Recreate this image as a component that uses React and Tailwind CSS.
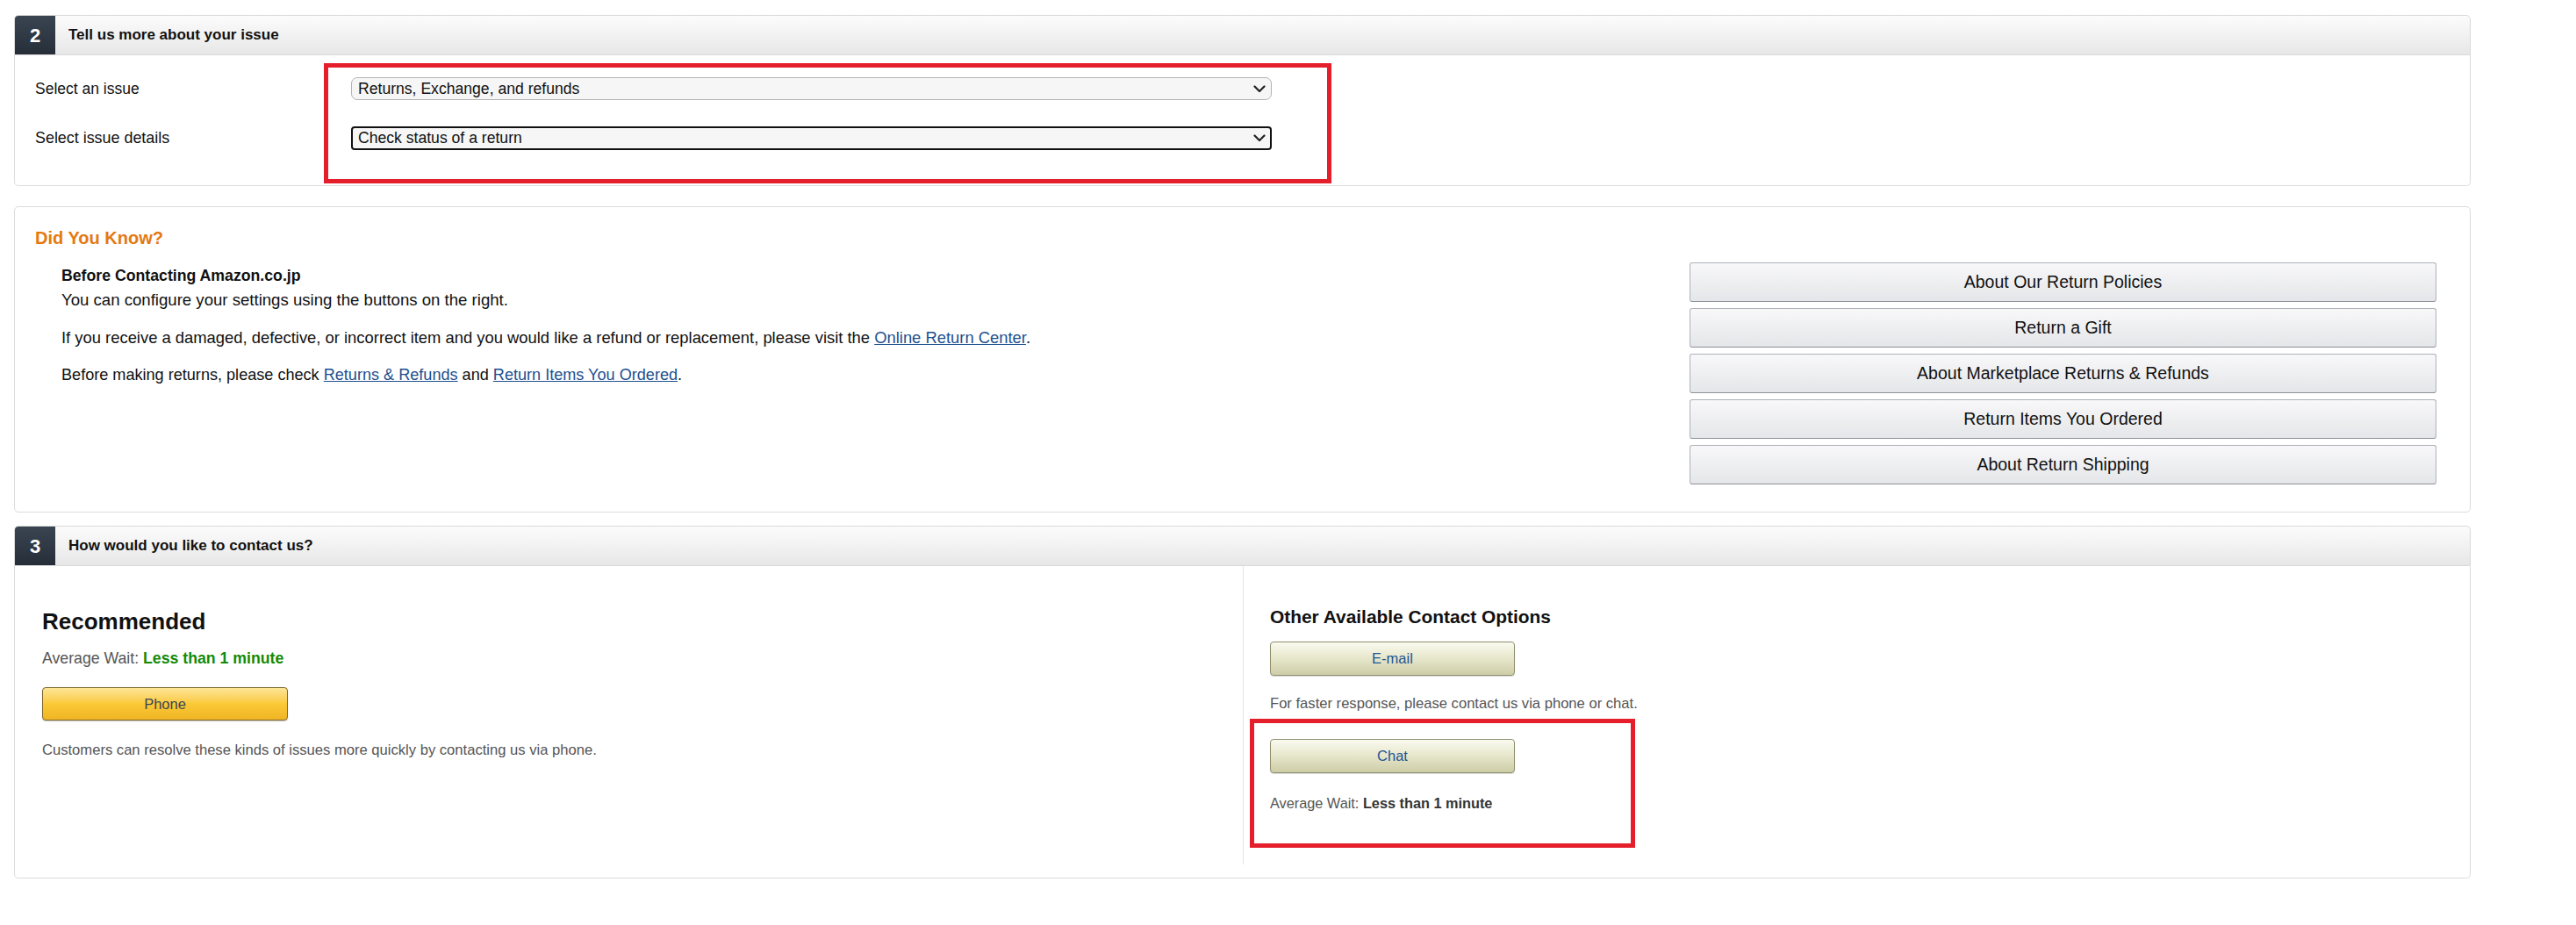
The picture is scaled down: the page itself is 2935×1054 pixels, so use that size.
import React from 'react';

const font = { fontFamily: '"Liberation Sans", Arial, sans-serif' };

const Chevron = () => (
  <svg width="14" height="9" viewBox="0 0 14 9" className="shrink-0">
    <path d="M1.5 1.5 L7 7 L12.5 1.5" fill="none" stroke="#222" strokeWidth="2.2" strokeLinecap="round" strokeLinejoin="round" />
  </svg>
);

const StepHeader = ({ num, title }) => (
  <div className="flex h-[46px] items-stretch rounded-t-[5px] border border-[#d9d9d9] bg-gradient-to-b from-[#fcfcfc] to-[#e7e7e7]">
    <div className="flex w-[46px] items-center justify-center rounded-tl-[4px] bg-gradient-to-b from-[#3b4552] to-[#252e38] text-[22px] font-bold text-white">
      {num}
    </div>
    <div className="ml-[15px] flex items-center text-[17px] font-bold text-[#111]">{title}</div>
  </div>
);

const SideButton = ({ children }) => (
  <div className="flex h-[45px] items-center justify-center rounded-[3px] border border-[#adb1b8] border-b-[#8d9096] bg-gradient-to-b from-[#f8f8f9] to-[#e5e6e9] text-[19.5px] text-[#111]">
    {children}
  </div>
);

const KhakiButton = ({ children }) => (
  <div className="flex h-[39px] w-[279px] items-center justify-center rounded-[4px] border border-[#8f8f6e] bg-gradient-to-b from-[#fafaf0] via-[#e6e6cb] to-[#cdcda7] text-[16.5px] text-[#1d5593] shadow-[0_1px_1px_rgba(0,0,0,0.15)]">
    {children}
  </div>
);

const Link = ({ children }) => <span className="text-[#1d4f8f] underline">{children}</span>;

export default function App() {
  return (
    <div className="min-h-[1054px] w-[2935px] bg-white pt-[17px] text-[#111]" style={font}>
      {/* Step 2 */}
      <div className="ml-[16px] w-[2799px]">
        <StepHeader num="2" title="Tell us more about your issue" />
        <div className="relative rounded-b-[5px] border-x border-b border-[#dcdcdc] pb-[41px] pt-[25px]">
          <div className="flex h-[26px] items-center">
            <div className="w-[383px] pl-[23px] text-[17.5px]">Select an issue</div>
            <div className="flex h-[26px] w-[1049px] items-center justify-between rounded-[7px] border border-[#b4b4b4] bg-[#f6f6f6] pl-[7px] pr-[6px] text-[17.6px]">
              <span>Returns, Exchange, and refunds</span>
              <Chevron />
            </div>
          </div>
          <div className="mt-[30px] flex h-[26px] items-center">
            <div className="w-[383px] pl-[23px] text-[17.9px]">Select issue details</div>
            <div className="flex h-[27px] w-[1049px] items-center justify-between rounded-[4px] border-2 border-[#111] bg-[#f6f6f6] pl-[6px] pr-[5px] text-[17.6px]">
              <span>Check status of a return</span>
              <Chevron />
            </div>
          </div>
          <div className="pointer-events-none absolute left-[352px] top-[9px] h-[137px] w-[1148px] border-[5px] border-[#e41f2b]" />
        </div>
      </div>

      {/* Did you know */}
      <div className="ml-[16px] mt-[23px] flex h-[349px] w-[2799px] rounded-[5px] border border-[#dcdcdc]">
        <div className="flex-1 pl-[23px] pt-[23px]">
          <div className="text-[20px] font-bold leading-[24px] text-[#e47911]">Did You Know?</div>
          <div className="mt-[17px] pl-[30px] text-[18.4px] leading-[28px]">
            <div className="text-[17.7px] font-bold">Before Contacting Amazon.co.jp</div>
            <div className="text-[18.6px]">You can configure your settings using the buttons on the right.</div>
            <div className="mt-[15px]">
              If you receive a damaged, defective, or incorrect item and you would like a refund or replacement, please visit the{' '}
              <Link>Online Return Center</Link>.
            </div>
            <div className="mt-[14px] text-[18.1px]">
              Before making returns, please check <Link>Returns &amp; Refunds</Link> and <Link>Return Items You Ordered</Link>.
            </div>
          </div>
        </div>
        <div className="mr-[38px] flex w-[851px] flex-col gap-[7px] pt-[63px]">
          <SideButton>About Our Return Policies</SideButton>
          <SideButton>Return a Gift</SideButton>
          <SideButton>About Marketplace Returns &amp; Refunds</SideButton>
          <SideButton>Return Items You Ordered</SideButton>
          <SideButton>About Return Shipping</SideButton>
        </div>
      </div>

      {/* Step 3 */}
      <div className="ml-[16px] mt-[15px] w-[2799px]">
        <StepHeader num="3" title="How would you like to contact us?" />
        <div className="flex rounded-b-[5px] border-x border-b border-[#dcdcdc] pb-[15px]">
          <div className="h-[340px] w-[1399px] pl-[31px] pt-[47px]">
            <div className="text-[26px] font-bold leading-[32px] text-[#111]">Recommended</div>
            <div className="mt-[14px] text-[17.7px] leading-[24px] text-[#555]">
              Average Wait: <span className="font-bold text-[#138a07]">Less than 1 minute</span>
            </div>
            <div className="mt-[21px] flex h-[38px] w-[280px] items-center justify-center rounded-[4px] border border-[#7d6629] bg-gradient-to-b from-[#fde595] via-[#fbc935] to-[#efb423] text-[16.5px] text-[#3a4656] shadow-[0_1px_1px_rgba(0,0,0,0.2)]">
              Phone
            </div>
            <div className="mt-[23px] text-[16.6px] leading-[22px] text-[#555]">
              Customers can resolve these kinds of issues more quickly by contacting us via phone.
            </div>
          </div>
          <div className="relative flex-1 border-l border-[#e6e6e6] pl-[30px] pt-[45px]">
            <div className="text-[20.9px] font-bold leading-[26px] text-[#111]">Other Available Contact Options</div>
            <div className="mt-[15px]">
              <KhakiButton>E-mail</KhakiButton>
            </div>
            <div className="mt-[21px] text-[16.6px] leading-[22px] text-[#555]">
              For faster response, please contact us via phone or chat.
            </div>
            <div className="mt-[29px]">
              <KhakiButton>Chat</KhakiButton>
            </div>
            <div className="mt-[23px] text-[16.3px] leading-[22px] text-[#555]">
              Average Wait: <span className="font-bold text-[#333]">Less than 1 minute</span>
            </div>
            <div className="pointer-events-none absolute left-[7px] top-[174px] h-[147px] w-[439px] border-[5px] border-[#e41f2b]" />
          </div>
        </div>
      </div>
    </div>
  );
}
